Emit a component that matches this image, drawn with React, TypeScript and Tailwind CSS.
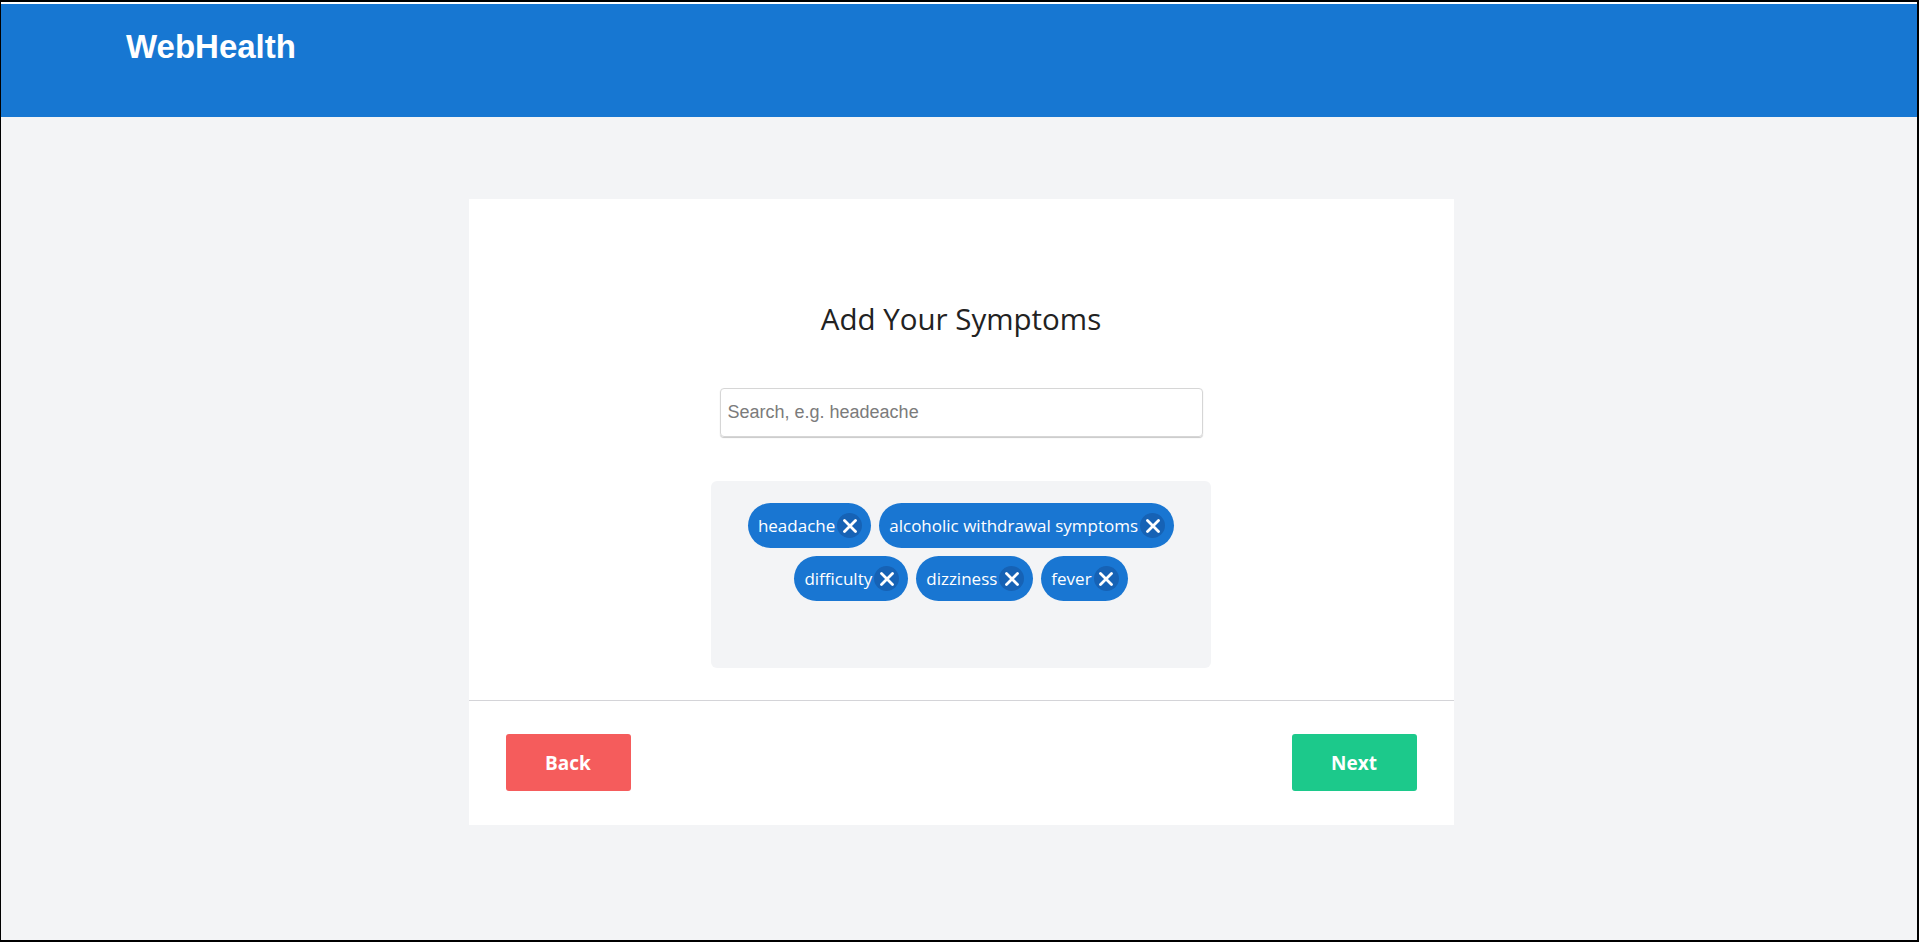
import { useState } from "react";

const initialSymptoms = ["headache", "alcoholic withdrawal symptoms", "difficulty", "dizziness", "fever"];

function CloseIcon() {
  return (
    <svg width="14" height="14" viewBox="0 0 14 14" fill="none">
      <path d="M1.5 1.5 12.5 12.5 M12.5 1.5 1.5 12.5" stroke="white" strokeWidth="2.8" strokeLinecap="round" />
    </svg>
  );
}

function Chip({ label, onRemove }: { label: string; onRemove: () => void }) {
  return (
    <div className="h-[45px] flex items-center gap-[2px] pl-[10px] pr-[9px] rounded-full bg-[#1976d2] text-white">
      <span className="text-[17px] leading-none font-['Open_Sans',sans-serif]">{label}</span>
      <button
        onClick={onRemove}
        className="w-[25px] h-[25px] rounded-full bg-[#1662b5] flex items-center justify-center"
      >
        <CloseIcon />
      </button>
    </div>
  );
}

export default function App() {
  const [symptoms, setSymptoms] = useState(initialSymptoms);
  const [query, setQuery] = useState("");

  return (
    <div className="h-[942px] flex flex-col bg-[#f3f4f6] border-black border-l border-t-2 border-r-2 border-b-2 overflow-hidden">
      <div className="h-[2px] bg-white" />

      {/* Header */}
      <header className="h-[113px] flex-shrink-0 bg-[#1777d2] pl-[125px] pt-[24px]">
        <h1 className="text-[33px] leading-[37px] font-bold text-white font-['Liberation_Sans',Arial,sans-serif]">
          WebHealth
        </h1>
      </header>

      <main className="flex-1 pt-[82px] pl-[4px]">
        <div className="mx-auto w-[985px] bg-white">
          <div className="pt-[98px] pb-[32px] flex flex-col items-center">
            <h2 className="text-[29.5px] text-[#222] font-['Open_Sans',sans-serif]">Add Your Symptoms</h2>

            <input
              value={query}
              onChange={(e) => setQuery(e.target.value)}
              placeholder="Search, e.g. headeache"
              className="mt-[47px] w-[483px] h-[49px] px-[7px] rounded-[4px] border border-[#d6d6d6] shadow-[0_1px_1px_rgba(0,0,0,0.22)] text-[18px] text-[#333] placeholder:text-[#7b7b7b] font-['Liberation_Sans',Arial,sans-serif] outline-none"
            />

            {/* Selected symptoms */}
            <div className="mt-[44px] w-[500px] h-[187px] rounded-[6px] bg-[#f3f4f6] px-[20px] pt-[22px] flex flex-wrap justify-center content-start gap-2">
              {symptoms.map((s) => (
                <Chip key={s} label={s} onRemove={() => setSymptoms(symptoms.filter((x) => x !== s))} />
              ))}
            </div>
          </div>

          {/* Footer */}
          <div className="border-t border-[#d4d4d8] flex justify-between px-[37px] pt-[33px] pb-[34px]">
            <button className="w-[125px] h-[57px] rounded-[3px] bg-[#f55c5c] text-white text-[19px] font-bold font-['Open_Sans',sans-serif]">
              Back
            </button>
            <button className="w-[125px] h-[57px] rounded-[3px] bg-[#1cc98b] text-white text-[19px] font-bold font-['Open_Sans',sans-serif]">
              Next
            </button>
          </div>
        </div>
      </main>
    </div>
  );
}
